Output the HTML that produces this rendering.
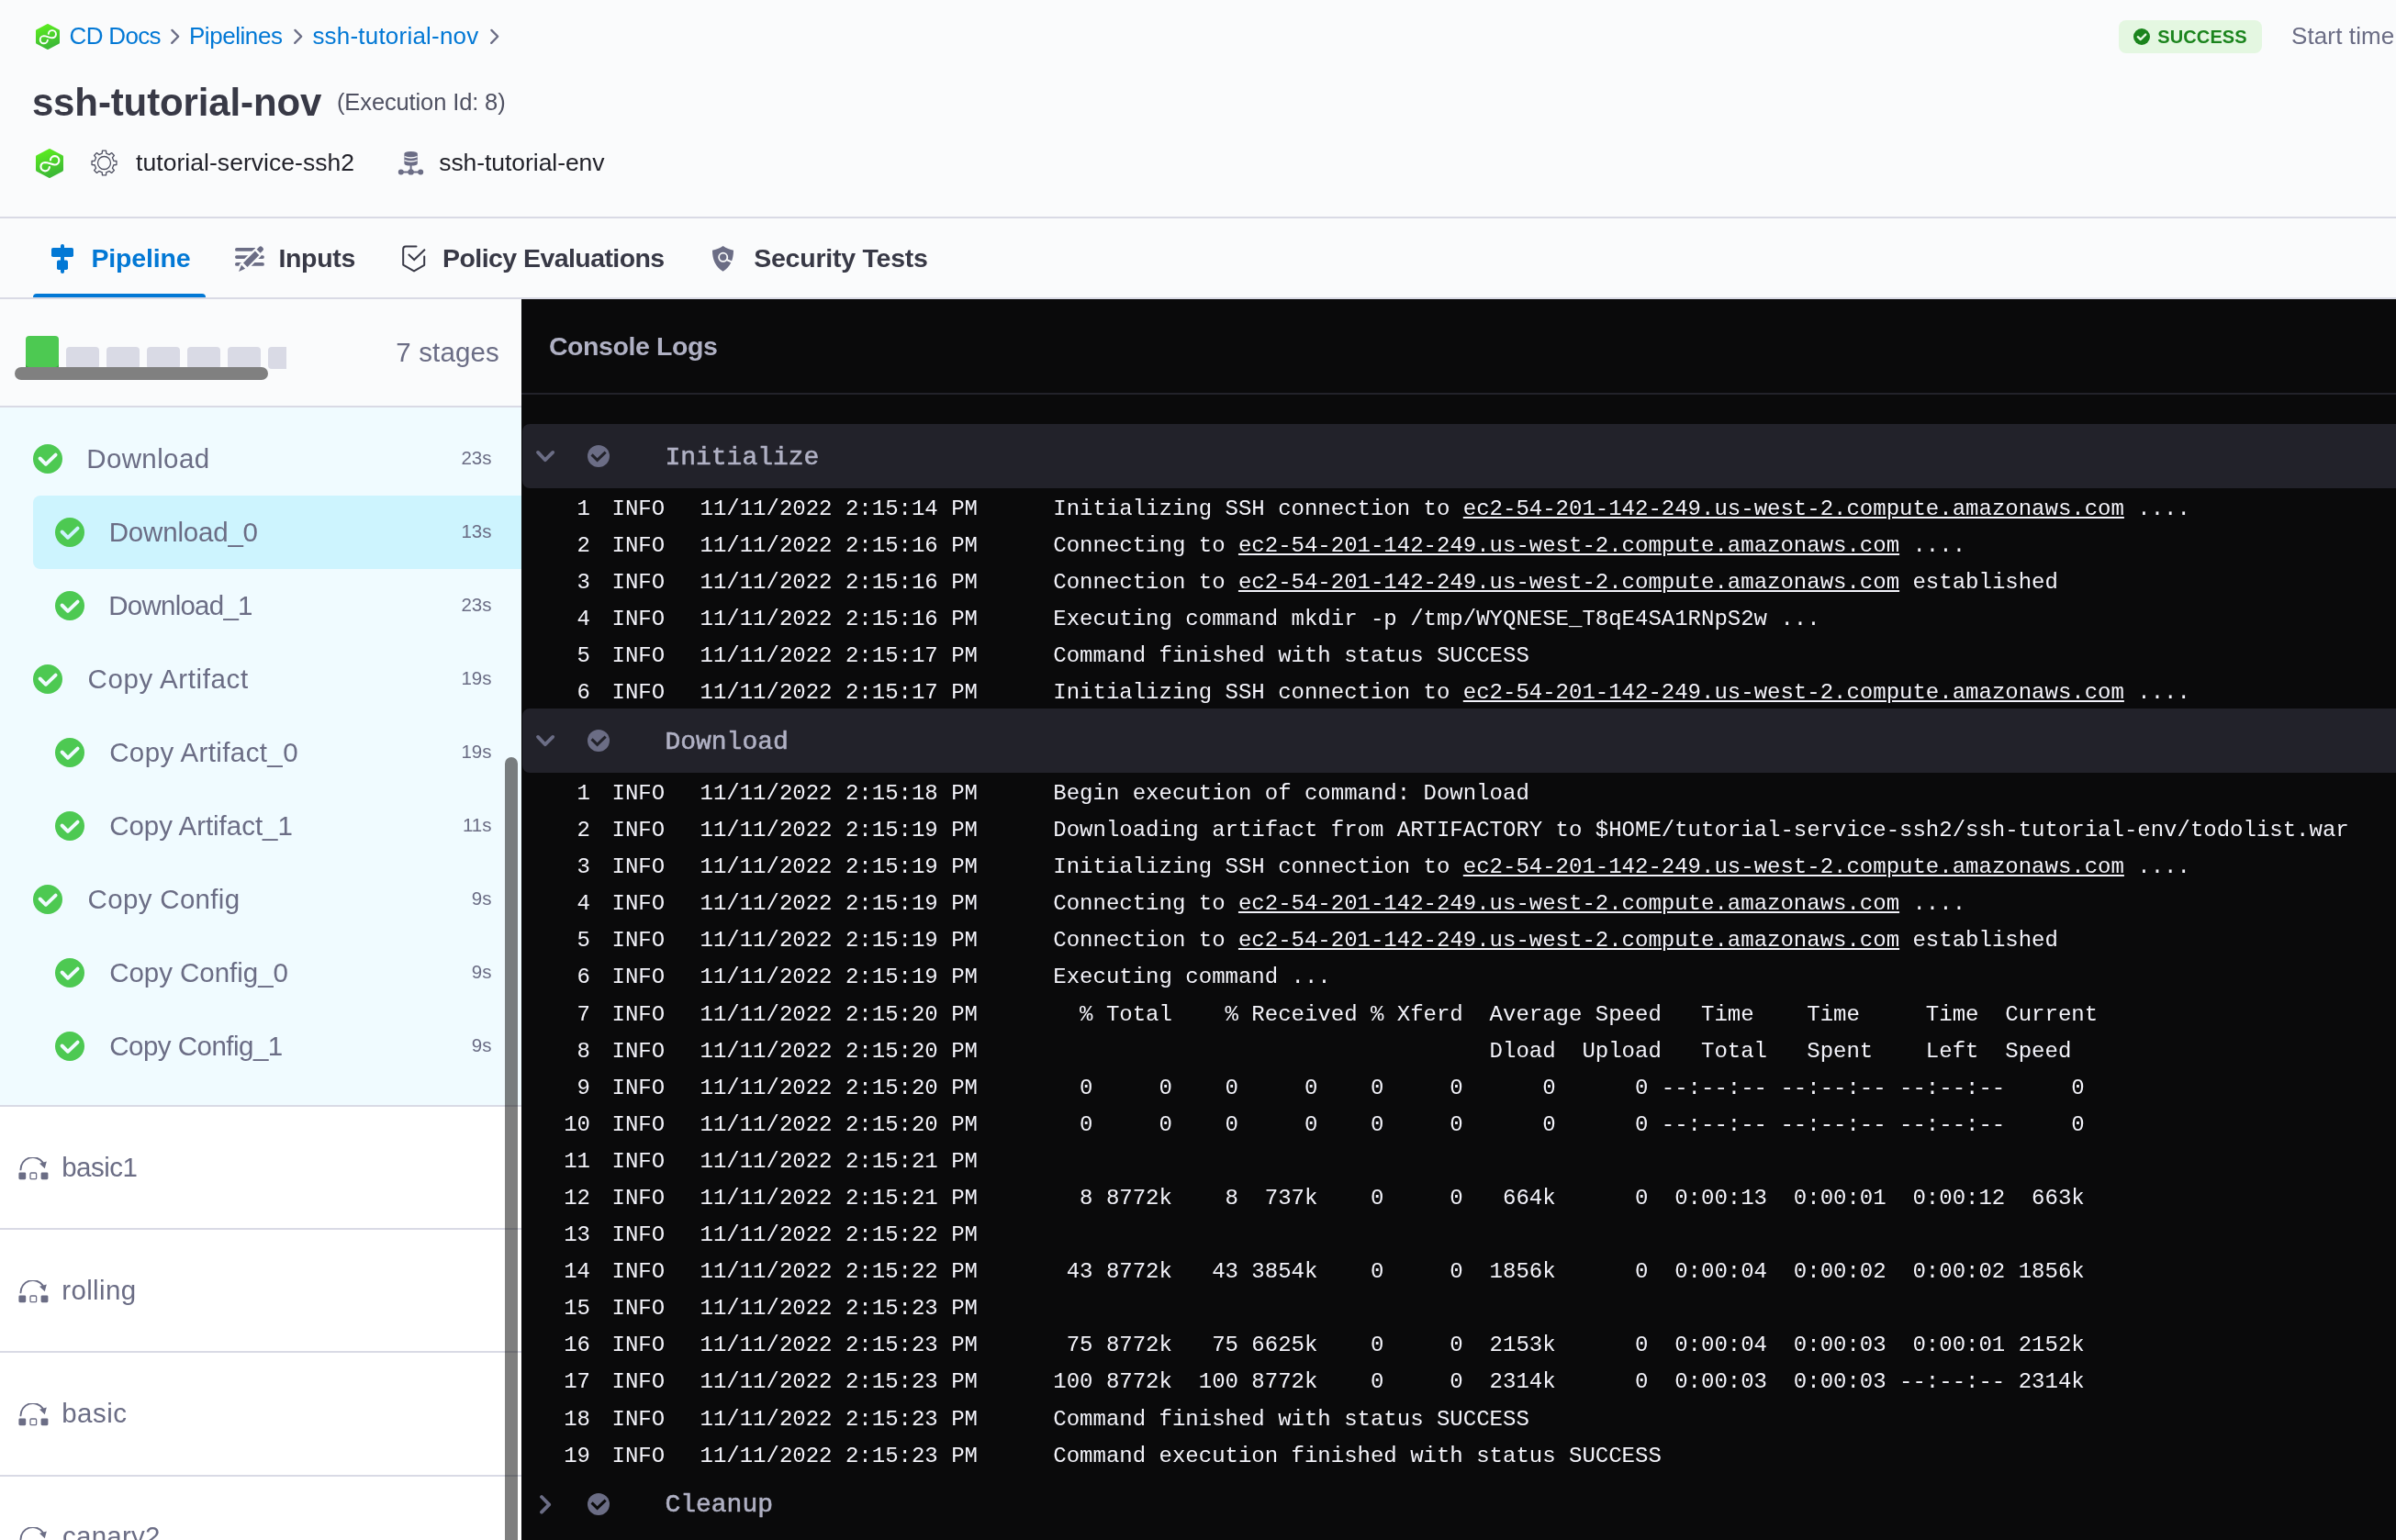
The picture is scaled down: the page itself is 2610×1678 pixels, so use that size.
<!DOCTYPE html>
<html><head><meta charset="utf-8"><title>ssh-tutorial-nov</title>
<style>
html,body{margin:0;padding:0;}
body{width:2610px;height:1678px;position:relative;overflow:hidden;background:#FAFBFC;font-family:'Liberation Sans', sans-serif;}
.t{position:absolute;white-space:pre;}
#w{position:absolute;left:0;top:0;width:2610px;height:1678px;will-change:transform;}
.b{position:absolute;display:block;}
u{text-decoration:underline;text-decoration-thickness:2px;text-underline-offset:2px;}
</style></head><body>
<div id="w">
<div class="b" style="left:0px;top:236px;width:2610px;height:2px;background:#D9DAE5;"></div>
<div class="b" style="left:0px;top:324px;width:2610px;height:2px;background:#D9DAE5;"></div>
<svg class="b" style="left:39px;top:26px" width="26" height="28" viewBox="0 0 26 28"><defs><linearGradient id="g1" x1="0" y1="0" x2="0.3" y2="1"><stop offset="0" stop-color="#5EF01E"/><stop offset="1" stop-color="#3DBA35"/></linearGradient></defs>
<polygon points="13.0,1.6 24.4,7.5600000000000005 24.4,20.439999999999998 13.0,26.4 1.6,20.439999999999998 1.6,7.5600000000000005" fill="url(#g1)" stroke="url(#g1)" stroke-width="3.2" stroke-linejoin="round"/>
<g transform="scale(1.0,1.0)"><path d="M13.8 10.8 A4.1 4.1 0 1 1 17.8 15.3 C15.6 15.3 11.4 13.1 8.7 13.1 A4.1 4.1 0 1 0 12.9 17.6" fill="none" stroke="#fff" stroke-width="1.9" stroke-linecap="round"/></g></svg>
<div class="t" style="left:75.60px;top:26.39px;font:400 26px/26px 'Liberation Sans', sans-serif;color:#0278D5;letter-spacing:-0.683px;">CD Docs</div>
<svg class="b" style="left:185px;top:31px" width="14" height="18" viewBox="0 0 14 18"><path d="M2.4 1.9 L9.2 8.7 L2.2 15.9" fill="none" stroke="#6B6D85" stroke-width="2.3" stroke-linecap="round" stroke-linejoin="round"/></svg>
<div class="t" style="left:205.90px;top:26.39px;font:400 26px/26px 'Liberation Sans', sans-serif;color:#0278D5;letter-spacing:-0.438px;">Pipelines</div>
<svg class="b" style="left:319px;top:31px" width="14" height="18" viewBox="0 0 14 18"><path d="M2.4 1.9 L9.2 8.7 L2.2 15.9" fill="none" stroke="#6B6D85" stroke-width="2.3" stroke-linecap="round" stroke-linejoin="round"/></svg>
<div class="t" style="left:340.40px;top:26.39px;font:400 26px/26px 'Liberation Sans', sans-serif;color:#0278D5;letter-spacing:0.207px;">ssh-tutorial-nov</div>
<svg class="b" style="left:533px;top:31px" width="14" height="18" viewBox="0 0 14 18"><path d="M2.4 1.9 L9.2 8.7 L2.2 15.9" fill="none" stroke="#6B6D85" stroke-width="2.3" stroke-linecap="round" stroke-linejoin="round"/></svg>
<div class="t" style="left:34.90px;top:91.05px;font:700 42px/42px 'Liberation Sans', sans-serif;color:#383946;letter-spacing:-0.127px;">ssh-tutorial-nov</div>
<div class="t" style="left:367.00px;top:98.81px;font:400 25.5px/25.5px 'Liberation Sans', sans-serif;color:#4F5162;letter-spacing:-0.125px;">(Execution Id: 8)</div>
<svg class="b" style="left:39px;top:162px" width="30" height="32" viewBox="0 0 30 32"><defs><linearGradient id="g2" x1="0" y1="0" x2="0.3" y2="1"><stop offset="0" stop-color="#5EF01E"/><stop offset="1" stop-color="#3DBA35"/></linearGradient></defs>
<polygon points="15.0,1.6 28.4,8.64 28.4,23.36 15.0,30.4 1.6,23.36 1.6,8.64" fill="url(#g2)" stroke="url(#g2)" stroke-width="3.2" stroke-linejoin="round"/>
<g transform="scale(1.1538461538461537,1.1428571428571428)"><path d="M13.8 10.8 A4.1 4.1 0 1 1 17.8 15.3 C15.6 15.3 11.4 13.1 8.7 13.1 A4.1 4.1 0 1 0 12.9 17.6" fill="none" stroke="#fff" stroke-width="1.9" stroke-linecap="round"/></g></svg>
<svg class="b" style="left:99px;top:163px" width="29" height="29" viewBox="0 0 29 29"><path d="M24.85 12.23 L27.95 12.48 L27.95 16.52 L24.85 16.77 L23.43 20.21 L25.44 22.58 L22.58 25.44 L20.21 23.43 L16.77 24.85 L16.52 27.95 L12.48 27.95 L12.23 24.85 L8.79 23.43 L6.42 25.44 L3.56 22.58 L5.57 20.21 L4.15 16.77 L1.05 16.52 L1.05 12.48 L4.15 12.23 L5.57 8.79 L3.56 6.42 L6.42 3.56 L8.79 5.57 L12.23 4.15 L12.48 1.05 L16.52 1.05 L16.77 4.15 L20.21 5.57 L22.58 3.56 L25.44 6.42 L23.43 8.79Z" fill="none" stroke="#4F5162" stroke-width="1.3" stroke-linejoin="round"/><circle cx="14.5" cy="14.5" r="7" fill="none" stroke="#4F5162" stroke-width="1.3"/></svg>
<div class="t" style="left:148.10px;top:163.57px;font:400 26.5px/26.5px 'Liberation Sans', sans-serif;color:#22222A;letter-spacing:0.045px;">tutorial-service-ssh2</div>
<svg class="b" style="left:433px;top:164px" width="29" height="29" viewBox="0 0 29 29"><g fill="#6B6D85"><path d="M7.4 3.5 Q7.4 1 14.6 1 Q21.8 1 21.8 3.5 V14 Q21.8 16.6 14.6 16.6 Q7.4 16.6 7.4 14 Z"/></g>
<path d="M7.6 6.6 Q14.6 9.4 21.6 6.6 M7.6 10.6 Q14.6 13.4 21.6 10.6" fill="none" stroke="#FAFBFC" stroke-width="1.3"/>
<path d="M14.6 16 V23.4 M3.8 23.4 H25.2" stroke="#6B6D85" stroke-width="2"/>
<circle cx="3.8" cy="23.4" r="3" fill="#6B6D85"/><circle cx="14.6" cy="23.4" r="3.2" fill="#6B6D85"/><circle cx="25.2" cy="23.4" r="3" fill="#6B6D85"/></svg>
<div class="t" style="left:478.20px;top:163.57px;font:400 26.5px/26.5px 'Liberation Sans', sans-serif;color:#22222A;letter-spacing:-0.053px;">ssh-tutorial-env</div>
<div class="b" style="left:2308px;top:22px;width:156px;height:36px;background:#E4F7E1;border-radius:8px"></div>
<svg class="b" style="left:2324px;top:31px" width="18" height="18" viewBox="0 0 18 18"><circle cx="9" cy="9" r="9" fill="#1B841D"/><path d="M4.8 9.2 L7.8 12 L13.2 6.6" fill="none" stroke="#E4F7E1" stroke-width="2.4" stroke-linecap="round" stroke-linejoin="round"/></svg>
<div class="t" style="left:2350.20px;top:30.07px;font:700 20px/20px 'Liberation Sans', sans-serif;color:#1B841D;letter-spacing:0.133px;">SUCCESS</div>
<div class="t" style="left:2496.00px;top:26.39px;font:400 26px/26px 'Liberation Sans', sans-serif;color:#6B6D85;letter-spacing:0.111px;">Start time</div>
<div class="b" style="left:36px;top:320px;width:188px;height:4px;background:#0278D5;border-radius:4px 4px 0 0"></div>
<svg class="b" style="left:55px;top:265px" width="26" height="34" viewBox="0 0 26 34"><g fill="#0278D5"><rect x="11" y="1" width="4" height="32" rx="2"/><rect x="1" y="5" width="24" height="10" rx="1.8"/><rect x="7" y="18.6" width="12" height="10.4" rx="1.8"/></g></svg>
<div class="t" style="left:99.50px;top:266.87px;font:700 28.5px/28.5px 'Liberation Sans', sans-serif;color:#0278D5;letter-spacing:-0.186px;">Pipeline</div>
<svg class="b" style="left:250px;top:262px" width="44" height="38" viewBox="0 0 44 38"><g transform="translate(-250,-262)"><g fill="none" stroke="#6B6D85" stroke-width="3.75" stroke-linecap="round"><path d="M257.9 271.9 H286"/><path d="M257.9 280 H286"/><path d="M257.9 287.9 H286"/></g>
<g fill="#6B6D85" stroke="#FAFBFC" stroke-width="4.4" stroke-linejoin="round" paint-order="stroke">
<polygon points="265,286.4 277.9,273.6 282.3,278 269.5,290.9"/>
<polygon points="260,295.9 263,288.75 267.1,292.7"/>
<path d="M279.6 271.8 L282.4 269 Q283.9 267.5 285.4 269 L286.4 270 Q287.9 271.5 286.4 273 L283.6 275.8 Z"/>
</g></g></svg>
<div class="t" style="left:303.40px;top:266.87px;font:700 28.5px/28.5px 'Liberation Sans', sans-serif;color:#383946;letter-spacing:-0.300px;">Inputs</div>
<svg class="b" style="left:437px;top:266px" width="28" height="32" viewBox="0 0 28 32"><path d="M16.5 2.4 H5 Q2.2 2.4 2.2 5.2 V22.6 L14 29.4 L25.2 22.8 V13.4" fill="none" stroke="#383946" stroke-width="2" stroke-linejoin="round" stroke-linecap="round"/><path d="M8.6 11.6 L14.2 17 L25.2 6.4" fill="none" stroke="#383946" stroke-width="2" stroke-linecap="square"/></svg>
<div class="t" style="left:482.10px;top:266.87px;font:700 28.5px/28.5px 'Liberation Sans', sans-serif;color:#383946;letter-spacing:-0.571px;">Policy Evaluations</div>
<svg class="b" style="left:770px;top:262px" width="34" height="38" viewBox="0 0 34 38"><g transform="translate(-770,-262)"><path d="M787.6 268 C784 270.4 780 272 776 272.7 C776 283 779.5 290.5 787.6 295.7 C795.5 290.5 799 283 799 272.7 C795.2 272 791.2 270.4 787.6 268 Z" fill="#6B6D85"/>
<circle cx="787.7" cy="280.3" r="4.6" fill="none" stroke="#FAFBFC" stroke-width="1.8"/>
<path d="M791.6 283 L800 286.8" stroke="#FAFBFC" stroke-width="2"/></g></svg>
<div class="t" style="left:821.20px;top:266.87px;font:700 28.5px/28.5px 'Liberation Sans', sans-serif;color:#383946;letter-spacing:-0.231px;">Security Tests</div>
<div class="b" style="left:0px;top:326px;width:568px;height:116px;background:#FAFBFC;"></div>
<div class="b" style="left:0px;top:442px;width:568px;height:2px;background:#D9DAE5;"></div>
<div class="b" style="left:0px;top:444px;width:568px;height:760px;background:#F0FBFF;"></div>
<div class="b" style="left:0px;top:1204px;width:568px;height:2px;background:#D9DAE5;"></div>
<div class="b" style="left:0px;top:1206px;width:568px;height:2610px;background:#FFFFFF;"></div>
<div class="b" style="left:28px;top:366px;width:36px;height:36px;background:#4DC952;border-radius:4px;box-shadow:inset 0 -2px 0 #2E9A33"></div>
<div class="b" style="left:72px;top:378px;width:36px;height:24px;background:#D9DAE5;border-radius:4px"></div>
<div class="b" style="left:116px;top:378px;width:36px;height:24px;background:#D9DAE5;border-radius:4px"></div>
<div class="b" style="left:160px;top:378px;width:36px;height:24px;background:#D9DAE5;border-radius:4px"></div>
<div class="b" style="left:204px;top:378px;width:36px;height:24px;background:#D9DAE5;border-radius:4px"></div>
<div class="b" style="left:248px;top:378px;width:36px;height:24px;background:#D9DAE5;border-radius:4px"></div>
<div class="b" style="left:292px;top:378px;width:20px;height:24px;background:#D9DAE5;border-radius:4px 0 0 4px"></div>
<div class="b" style="left:16px;top:400px;width:276px;height:14px;background:#808080;border-radius:7px"></div>
<div class="t" style="right:2066.00px;top:368.93px;font:400 29.5px/29.5px 'Liberation Sans', sans-serif;color:#6B6D85;letter-spacing:0.143px;">7 stages</div>
<div class="b" style="left:36px;top:540px;width:532px;height:80px;background:#CDF4FE;border-radius:8px 0 0 8px"></div>
<svg class="b" style="left:36px;top:484px" width="32" height="32" viewBox="0 0 32 32"><circle cx="16" cy="16" r="16" fill="#4DC952"/><path d="M7.6 15.5 L13.9 21.8 L24.6 11.6" fill="none" stroke="#F0FBFF" stroke-width="3.9" stroke-linecap="round" stroke-linejoin="round"/></svg>
<div class="t" style="left:94.20px;top:485.03px;font:400 29.5px/29.5px 'Liberation Sans', sans-serif;color:#6B6D85;letter-spacing:0.386px;">Download</div>
<div class="t" style="right:2074.50px;top:488.65px;font:400 20.5px/20.5px 'Liberation Sans', sans-serif;color:#6B6D85;">23s</div>
<svg class="b" style="left:60px;top:564px" width="32" height="32" viewBox="0 0 32 32"><circle cx="16" cy="16" r="16" fill="#4DC952"/><path d="M7.6 15.5 L13.9 21.8 L24.6 11.6" fill="none" stroke="#CDF4FE" stroke-width="3.9" stroke-linecap="round" stroke-linejoin="round"/></svg>
<div class="t" style="left:118.75px;top:565.03px;font:400 29.5px/29.5px 'Liberation Sans', sans-serif;color:#6B6D85;letter-spacing:-0.194px;">Download_0</div>
<div class="t" style="right:2074.50px;top:568.65px;font:400 20.5px/20.5px 'Liberation Sans', sans-serif;color:#6B6D85;">13s</div>
<svg class="b" style="left:60px;top:644px" width="32" height="32" viewBox="0 0 32 32"><circle cx="16" cy="16" r="16" fill="#4DC952"/><path d="M7.6 15.5 L13.9 21.8 L24.6 11.6" fill="none" stroke="#F0FBFF" stroke-width="3.9" stroke-linecap="round" stroke-linejoin="round"/></svg>
<div class="t" style="left:118.20px;top:645.03px;font:400 29.5px/29.5px 'Liberation Sans', sans-serif;color:#6B6D85;letter-spacing:-0.744px;">Download_1</div>
<div class="t" style="right:2074.50px;top:648.65px;font:400 20.5px/20.5px 'Liberation Sans', sans-serif;color:#6B6D85;">23s</div>
<svg class="b" style="left:36px;top:724px" width="32" height="32" viewBox="0 0 32 32"><circle cx="16" cy="16" r="16" fill="#4DC952"/><path d="M7.6 15.5 L13.9 21.8 L24.6 11.6" fill="none" stroke="#F0FBFF" stroke-width="3.9" stroke-linecap="round" stroke-linejoin="round"/></svg>
<div class="t" style="left:95.60px;top:725.03px;font:400 29.5px/29.5px 'Liberation Sans', sans-serif;color:#6B6D85;letter-spacing:0.608px;">Copy Artifact</div>
<div class="t" style="right:2074.50px;top:728.65px;font:400 20.5px/20.5px 'Liberation Sans', sans-serif;color:#6B6D85;">19s</div>
<svg class="b" style="left:60px;top:804px" width="32" height="32" viewBox="0 0 32 32"><circle cx="16" cy="16" r="16" fill="#4DC952"/><path d="M7.6 15.5 L13.9 21.8 L24.6 11.6" fill="none" stroke="#F0FBFF" stroke-width="3.9" stroke-linecap="round" stroke-linejoin="round"/></svg>
<div class="t" style="left:119.20px;top:805.03px;font:400 29.5px/29.5px 'Liberation Sans', sans-serif;color:#6B6D85;letter-spacing:0.379px;">Copy Artifact_0</div>
<div class="t" style="right:2074.50px;top:808.65px;font:400 20.5px/20.5px 'Liberation Sans', sans-serif;color:#6B6D85;">19s</div>
<svg class="b" style="left:60px;top:884px" width="32" height="32" viewBox="0 0 32 32"><circle cx="16" cy="16" r="16" fill="#4DC952"/><path d="M7.6 15.5 L13.9 21.8 L24.6 11.6" fill="none" stroke="#F0FBFF" stroke-width="3.9" stroke-linecap="round" stroke-linejoin="round"/></svg>
<div class="t" style="left:119.20px;top:885.03px;font:400 29.5px/29.5px 'Liberation Sans', sans-serif;color:#6B6D85;letter-spacing:-0.029px;">Copy Artifact_1</div>
<div class="t" style="right:2074.50px;top:888.65px;font:400 20.5px/20.5px 'Liberation Sans', sans-serif;color:#6B6D85;">11s</div>
<svg class="b" style="left:36px;top:964px" width="32" height="32" viewBox="0 0 32 32"><circle cx="16" cy="16" r="16" fill="#4DC952"/><path d="M7.6 15.5 L13.9 21.8 L24.6 11.6" fill="none" stroke="#F0FBFF" stroke-width="3.9" stroke-linecap="round" stroke-linejoin="round"/></svg>
<div class="t" style="left:95.60px;top:965.03px;font:400 29.5px/29.5px 'Liberation Sans', sans-serif;color:#6B6D85;letter-spacing:0.320px;">Copy Config</div>
<div class="t" style="right:2074.50px;top:968.65px;font:400 20.5px/20.5px 'Liberation Sans', sans-serif;color:#6B6D85;">9s</div>
<svg class="b" style="left:60px;top:1044px" width="32" height="32" viewBox="0 0 32 32"><circle cx="16" cy="16" r="16" fill="#4DC952"/><path d="M7.6 15.5 L13.9 21.8 L24.6 11.6" fill="none" stroke="#F0FBFF" stroke-width="3.9" stroke-linecap="round" stroke-linejoin="round"/></svg>
<div class="t" style="left:119.20px;top:1045.03px;font:400 29.5px/29.5px 'Liberation Sans', sans-serif;color:#6B6D85;letter-spacing:-0.033px;">Copy Config_0</div>
<div class="t" style="right:2074.50px;top:1048.65px;font:400 20.5px/20.5px 'Liberation Sans', sans-serif;color:#6B6D85;">9s</div>
<svg class="b" style="left:60px;top:1124px" width="32" height="32" viewBox="0 0 32 32"><circle cx="16" cy="16" r="16" fill="#4DC952"/><path d="M7.6 15.5 L13.9 21.8 L24.6 11.6" fill="none" stroke="#F0FBFF" stroke-width="3.9" stroke-linecap="round" stroke-linejoin="round"/></svg>
<div class="t" style="left:119.20px;top:1125.03px;font:400 29.5px/29.5px 'Liberation Sans', sans-serif;color:#6B6D85;letter-spacing:-0.508px;">Copy Config_1</div>
<div class="t" style="right:2074.50px;top:1128.65px;font:400 20.5px/20.5px 'Liberation Sans', sans-serif;color:#6B6D85;">9s</div>
<svg class="b" style="left:20px;top:1260.6px" width="34" height="28" viewBox="0 0 34 28"><g fill="#6B6D85"><rect x="0.4" y="16.4" width="7.8" height="7.8" rx="1.4"/><rect x="24.6" y="16.4" width="7.8" height="7.8" rx="1.4"/></g>
<rect x="13" y="17" width="6.6" height="6.6" rx="1.2" fill="none" stroke="#6B6D85" stroke-width="1.3"/>
<path d="M2.5 13.4 A13.3 13.3 0 0 1 26.6 5.6" fill="none" stroke="#6B6D85" stroke-width="1.9" stroke-linecap="round"/>
<path d="M23 6.8 L30.8 4.4 L28.8 12.2 Z" fill="#6B6D85"/></svg>
<div class="t" style="left:67.20px;top:1256.73px;font:400 29.5px/29.5px 'Liberation Sans', sans-serif;color:#6B6D85;letter-spacing:-0.500px;">basic1</div>
<div class="b" style="left:0px;top:1338px;width:568px;height:2px;background:#D9DAE5;"></div>
<svg class="b" style="left:20px;top:1394.6px" width="34" height="28" viewBox="0 0 34 28"><g fill="#6B6D85"><rect x="0.4" y="16.4" width="7.8" height="7.8" rx="1.4"/><rect x="24.6" y="16.4" width="7.8" height="7.8" rx="1.4"/></g>
<rect x="13" y="17" width="6.6" height="6.6" rx="1.2" fill="none" stroke="#6B6D85" stroke-width="1.3"/>
<path d="M2.5 13.4 A13.3 13.3 0 0 1 26.6 5.6" fill="none" stroke="#6B6D85" stroke-width="1.9" stroke-linecap="round"/>
<path d="M23 6.8 L30.8 4.4 L28.8 12.2 Z" fill="#6B6D85"/></svg>
<div class="t" style="left:67.20px;top:1390.93px;font:400 29.5px/29.5px 'Liberation Sans', sans-serif;color:#6B6D85;letter-spacing:0.383px;">rolling</div>
<div class="b" style="left:0px;top:1472px;width:568px;height:2px;background:#D9DAE5;"></div>
<svg class="b" style="left:20px;top:1528.6px" width="34" height="28" viewBox="0 0 34 28"><g fill="#6B6D85"><rect x="0.4" y="16.4" width="7.8" height="7.8" rx="1.4"/><rect x="24.6" y="16.4" width="7.8" height="7.8" rx="1.4"/></g>
<rect x="13" y="17" width="6.6" height="6.6" rx="1.2" fill="none" stroke="#6B6D85" stroke-width="1.3"/>
<path d="M2.5 13.4 A13.3 13.3 0 0 1 26.6 5.6" fill="none" stroke="#6B6D85" stroke-width="1.9" stroke-linecap="round"/>
<path d="M23 6.8 L30.8 4.4 L28.8 12.2 Z" fill="#6B6D85"/></svg>
<div class="t" style="left:67.20px;top:1525.13px;font:400 29.5px/29.5px 'Liberation Sans', sans-serif;color:#6B6D85;letter-spacing:0.500px;">basic</div>
<div class="b" style="left:0px;top:1607px;width:568px;height:2px;background:#D9DAE5;"></div>
<svg class="b" style="left:20px;top:1663.6px" width="34" height="28" viewBox="0 0 34 28"><g fill="#6B6D85"><rect x="0.4" y="16.4" width="7.8" height="7.8" rx="1.4"/><rect x="24.6" y="16.4" width="7.8" height="7.8" rx="1.4"/></g>
<rect x="13" y="17" width="6.6" height="6.6" rx="1.2" fill="none" stroke="#6B6D85" stroke-width="1.3"/>
<path d="M2.5 13.4 A13.3 13.3 0 0 1 26.6 5.6" fill="none" stroke="#6B6D85" stroke-width="1.9" stroke-linecap="round"/>
<path d="M23 6.8 L30.8 4.4 L28.8 12.2 Z" fill="#6B6D85"/></svg>
<div class="t" style="left:68.00px;top:1659.33px;font:400 29.5px/29.5px 'Liberation Sans', sans-serif;color:#6B6D85;letter-spacing:0.250px;">canary2</div>
<div class="b" style="left:550px;top:825px;width:14px;height:900px;background:rgba(0,0,0,0.5);border-radius:7px 7px 0 0"></div>
<div class="b" style="left:568px;top:326px;width:2042px;height:1352px;background:#0A0A0B;"></div>
<div class="t" style="left:597.90px;top:363.47px;font:700 28.5px/28.5px 'Liberation Sans', sans-serif;color:#B0B1C4;letter-spacing:-0.409px;">Console Logs</div>
<div class="b" style="left:568px;top:428px;width:2042px;height:2px;background:#22222A;"></div>
<div class="b" style="left:569px;top:462px;width:2041px;height:70px;background:#22222A;border-radius:8px 0 0 8px"></div>
<svg class="b" style="left:582px;top:489px" width="24" height="16" viewBox="0 0 24 16"><path d="M4 3.9 L11.9 12.2 L20.2 3.9" fill="none" stroke="#6B6D85" stroke-width="3.8" stroke-linecap="round" stroke-linejoin="round"/></svg>
<svg class="b" style="left:640px;top:485px" width="24" height="24" viewBox="0 0 24 24"><circle cx="12" cy="12" r="12" fill="#6B6D85"/><path d="M5.6 11.4 L10.6 16.4 L18.6 8.6" fill="none" stroke="#22222A" stroke-width="3" stroke-linecap="square" stroke-linejoin="miter"/></svg>
<div class="t" style="left:724.40px;top:484.54px;font:400 28px/28px 'Liberation Mono', monospace;color:#B0B1C4;-webkit-text-stroke:0.55px #B0B1C4">Initialize</div>
<div class="t" style="right:1967.00px;top:543.00px;font:400 24px/24px 'Liberation Mono', monospace;color:#F3F3FA;">1</div>
<div class="t" style="left:666.50px;top:543.00px;font:400 24px/24px 'Liberation Mono', monospace;color:#F3F3FA;">INFO</div>
<div class="t" style="left:762.50px;top:543.00px;font:400 24px/24px 'Liberation Mono', monospace;color:#F3F3FA;">11/11/2022 2:15:14 PM</div>
<div class="t" style="left:1147.30px;top:543.00px;font:400 24px/24px 'Liberation Mono', monospace;color:#F3F3FA;white-space:pre">Initializing SSH connection to <u>ec2-54-201-142-249.us-west-2.compute.amazonaws.com</u> ....</div>
<div class="t" style="right:1967.00px;top:583.09px;font:400 24px/24px 'Liberation Mono', monospace;color:#F3F3FA;">2</div>
<div class="t" style="left:666.50px;top:583.09px;font:400 24px/24px 'Liberation Mono', monospace;color:#F3F3FA;">INFO</div>
<div class="t" style="left:762.50px;top:583.09px;font:400 24px/24px 'Liberation Mono', monospace;color:#F3F3FA;">11/11/2022 2:15:16 PM</div>
<div class="t" style="left:1147.30px;top:583.09px;font:400 24px/24px 'Liberation Mono', monospace;color:#F3F3FA;white-space:pre">Connecting to <u>ec2-54-201-142-249.us-west-2.compute.amazonaws.com</u> ....</div>
<div class="t" style="right:1967.00px;top:623.18px;font:400 24px/24px 'Liberation Mono', monospace;color:#F3F3FA;">3</div>
<div class="t" style="left:666.50px;top:623.18px;font:400 24px/24px 'Liberation Mono', monospace;color:#F3F3FA;">INFO</div>
<div class="t" style="left:762.50px;top:623.18px;font:400 24px/24px 'Liberation Mono', monospace;color:#F3F3FA;">11/11/2022 2:15:16 PM</div>
<div class="t" style="left:1147.30px;top:623.18px;font:400 24px/24px 'Liberation Mono', monospace;color:#F3F3FA;white-space:pre">Connection to <u>ec2-54-201-142-249.us-west-2.compute.amazonaws.com</u> established</div>
<div class="t" style="right:1967.00px;top:663.27px;font:400 24px/24px 'Liberation Mono', monospace;color:#F3F3FA;">4</div>
<div class="t" style="left:666.50px;top:663.27px;font:400 24px/24px 'Liberation Mono', monospace;color:#F3F3FA;">INFO</div>
<div class="t" style="left:762.50px;top:663.27px;font:400 24px/24px 'Liberation Mono', monospace;color:#F3F3FA;">11/11/2022 2:15:16 PM</div>
<div class="t" style="left:1147.30px;top:663.27px;font:400 24px/24px 'Liberation Mono', monospace;color:#F3F3FA;white-space:pre">Executing command mkdir -p /tmp/WYQNESE_T8qE4SA1RNpS2w ...</div>
<div class="t" style="right:1967.00px;top:703.36px;font:400 24px/24px 'Liberation Mono', monospace;color:#F3F3FA;">5</div>
<div class="t" style="left:666.50px;top:703.36px;font:400 24px/24px 'Liberation Mono', monospace;color:#F3F3FA;">INFO</div>
<div class="t" style="left:762.50px;top:703.36px;font:400 24px/24px 'Liberation Mono', monospace;color:#F3F3FA;">11/11/2022 2:15:17 PM</div>
<div class="t" style="left:1147.30px;top:703.36px;font:400 24px/24px 'Liberation Mono', monospace;color:#F3F3FA;white-space:pre">Command finished with status SUCCESS</div>
<div class="t" style="right:1967.00px;top:743.45px;font:400 24px/24px 'Liberation Mono', monospace;color:#F3F3FA;">6</div>
<div class="t" style="left:666.50px;top:743.45px;font:400 24px/24px 'Liberation Mono', monospace;color:#F3F3FA;">INFO</div>
<div class="t" style="left:762.50px;top:743.45px;font:400 24px/24px 'Liberation Mono', monospace;color:#F3F3FA;">11/11/2022 2:15:17 PM</div>
<div class="t" style="left:1147.30px;top:743.45px;font:400 24px/24px 'Liberation Mono', monospace;color:#F3F3FA;white-space:pre">Initializing SSH connection to <u>ec2-54-201-142-249.us-west-2.compute.amazonaws.com</u> ....</div>
<div class="b" style="left:569px;top:772px;width:2041px;height:70px;background:#22222A;border-radius:8px 0 0 8px"></div>
<svg class="b" style="left:582px;top:799px" width="24" height="16" viewBox="0 0 24 16"><path d="M4 3.9 L11.9 12.2 L20.2 3.9" fill="none" stroke="#6B6D85" stroke-width="3.8" stroke-linecap="round" stroke-linejoin="round"/></svg>
<svg class="b" style="left:640px;top:795px" width="24" height="24" viewBox="0 0 24 24"><circle cx="12" cy="12" r="12" fill="#6B6D85"/><path d="M5.6 11.4 L10.6 16.4 L18.6 8.6" fill="none" stroke="#22222A" stroke-width="3" stroke-linecap="square" stroke-linejoin="miter"/></svg>
<div class="t" style="left:724.40px;top:794.54px;font:400 28px/28px 'Liberation Mono', monospace;color:#B0B1C4;-webkit-text-stroke:0.55px #B0B1C4">Download</div>
<div class="t" style="right:1967.00px;top:853.00px;font:400 24px/24px 'Liberation Mono', monospace;color:#F3F3FA;">1</div>
<div class="t" style="left:666.50px;top:853.00px;font:400 24px/24px 'Liberation Mono', monospace;color:#F3F3FA;">INFO</div>
<div class="t" style="left:762.50px;top:853.00px;font:400 24px/24px 'Liberation Mono', monospace;color:#F3F3FA;">11/11/2022 2:15:18 PM</div>
<div class="t" style="left:1147.30px;top:853.00px;font:400 24px/24px 'Liberation Mono', monospace;color:#F3F3FA;white-space:pre">Begin execution of command: Download</div>
<div class="t" style="right:1967.00px;top:893.09px;font:400 24px/24px 'Liberation Mono', monospace;color:#F3F3FA;">2</div>
<div class="t" style="left:666.50px;top:893.09px;font:400 24px/24px 'Liberation Mono', monospace;color:#F3F3FA;">INFO</div>
<div class="t" style="left:762.50px;top:893.09px;font:400 24px/24px 'Liberation Mono', monospace;color:#F3F3FA;">11/11/2022 2:15:19 PM</div>
<div class="t" style="left:1147.30px;top:893.09px;font:400 24px/24px 'Liberation Mono', monospace;color:#F3F3FA;white-space:pre">Downloading artifact from ARTIFACTORY to $HOME/tutorial-service-ssh2/ssh-tutorial-env/todolist.war</div>
<div class="t" style="right:1967.00px;top:933.18px;font:400 24px/24px 'Liberation Mono', monospace;color:#F3F3FA;">3</div>
<div class="t" style="left:666.50px;top:933.18px;font:400 24px/24px 'Liberation Mono', monospace;color:#F3F3FA;">INFO</div>
<div class="t" style="left:762.50px;top:933.18px;font:400 24px/24px 'Liberation Mono', monospace;color:#F3F3FA;">11/11/2022 2:15:19 PM</div>
<div class="t" style="left:1147.30px;top:933.18px;font:400 24px/24px 'Liberation Mono', monospace;color:#F3F3FA;white-space:pre">Initializing SSH connection to <u>ec2-54-201-142-249.us-west-2.compute.amazonaws.com</u> ....</div>
<div class="t" style="right:1967.00px;top:973.27px;font:400 24px/24px 'Liberation Mono', monospace;color:#F3F3FA;">4</div>
<div class="t" style="left:666.50px;top:973.27px;font:400 24px/24px 'Liberation Mono', monospace;color:#F3F3FA;">INFO</div>
<div class="t" style="left:762.50px;top:973.27px;font:400 24px/24px 'Liberation Mono', monospace;color:#F3F3FA;">11/11/2022 2:15:19 PM</div>
<div class="t" style="left:1147.30px;top:973.27px;font:400 24px/24px 'Liberation Mono', monospace;color:#F3F3FA;white-space:pre">Connecting to <u>ec2-54-201-142-249.us-west-2.compute.amazonaws.com</u> ....</div>
<div class="t" style="right:1967.00px;top:1013.36px;font:400 24px/24px 'Liberation Mono', monospace;color:#F3F3FA;">5</div>
<div class="t" style="left:666.50px;top:1013.36px;font:400 24px/24px 'Liberation Mono', monospace;color:#F3F3FA;">INFO</div>
<div class="t" style="left:762.50px;top:1013.36px;font:400 24px/24px 'Liberation Mono', monospace;color:#F3F3FA;">11/11/2022 2:15:19 PM</div>
<div class="t" style="left:1147.30px;top:1013.36px;font:400 24px/24px 'Liberation Mono', monospace;color:#F3F3FA;white-space:pre">Connection to <u>ec2-54-201-142-249.us-west-2.compute.amazonaws.com</u> established</div>
<div class="t" style="right:1967.00px;top:1053.45px;font:400 24px/24px 'Liberation Mono', monospace;color:#F3F3FA;">6</div>
<div class="t" style="left:666.50px;top:1053.45px;font:400 24px/24px 'Liberation Mono', monospace;color:#F3F3FA;">INFO</div>
<div class="t" style="left:762.50px;top:1053.45px;font:400 24px/24px 'Liberation Mono', monospace;color:#F3F3FA;">11/11/2022 2:15:19 PM</div>
<div class="t" style="left:1147.30px;top:1053.45px;font:400 24px/24px 'Liberation Mono', monospace;color:#F3F3FA;white-space:pre">Executing command ...</div>
<div class="t" style="right:1967.00px;top:1093.54px;font:400 24px/24px 'Liberation Mono', monospace;color:#F3F3FA;">7</div>
<div class="t" style="left:666.50px;top:1093.54px;font:400 24px/24px 'Liberation Mono', monospace;color:#F3F3FA;">INFO</div>
<div class="t" style="left:762.50px;top:1093.54px;font:400 24px/24px 'Liberation Mono', monospace;color:#F3F3FA;">11/11/2022 2:15:20 PM</div>
<div class="t" style="left:1147.30px;top:1093.54px;font:400 24px/24px 'Liberation Mono', monospace;color:#F3F3FA;white-space:pre">  % Total    % Received % Xferd  Average Speed   Time    Time     Time  Current</div>
<div class="t" style="right:1967.00px;top:1133.63px;font:400 24px/24px 'Liberation Mono', monospace;color:#F3F3FA;">8</div>
<div class="t" style="left:666.50px;top:1133.63px;font:400 24px/24px 'Liberation Mono', monospace;color:#F3F3FA;">INFO</div>
<div class="t" style="left:762.50px;top:1133.63px;font:400 24px/24px 'Liberation Mono', monospace;color:#F3F3FA;">11/11/2022 2:15:20 PM</div>
<div class="t" style="left:1147.30px;top:1133.63px;font:400 24px/24px 'Liberation Mono', monospace;color:#F3F3FA;white-space:pre">                                 Dload  Upload   Total   Spent    Left  Speed</div>
<div class="t" style="right:1967.00px;top:1173.72px;font:400 24px/24px 'Liberation Mono', monospace;color:#F3F3FA;">9</div>
<div class="t" style="left:666.50px;top:1173.72px;font:400 24px/24px 'Liberation Mono', monospace;color:#F3F3FA;">INFO</div>
<div class="t" style="left:762.50px;top:1173.72px;font:400 24px/24px 'Liberation Mono', monospace;color:#F3F3FA;">11/11/2022 2:15:20 PM</div>
<div class="t" style="left:1147.30px;top:1173.72px;font:400 24px/24px 'Liberation Mono', monospace;color:#F3F3FA;white-space:pre">  0     0    0     0    0     0      0      0 --:--:-- --:--:-- --:--:--     0</div>
<div class="t" style="right:1967.00px;top:1213.81px;font:400 24px/24px 'Liberation Mono', monospace;color:#F3F3FA;">10</div>
<div class="t" style="left:666.50px;top:1213.81px;font:400 24px/24px 'Liberation Mono', monospace;color:#F3F3FA;">INFO</div>
<div class="t" style="left:762.50px;top:1213.81px;font:400 24px/24px 'Liberation Mono', monospace;color:#F3F3FA;">11/11/2022 2:15:20 PM</div>
<div class="t" style="left:1147.30px;top:1213.81px;font:400 24px/24px 'Liberation Mono', monospace;color:#F3F3FA;white-space:pre">  0     0    0     0    0     0      0      0 --:--:-- --:--:-- --:--:--     0</div>
<div class="t" style="right:1967.00px;top:1253.90px;font:400 24px/24px 'Liberation Mono', monospace;color:#F3F3FA;">11</div>
<div class="t" style="left:666.50px;top:1253.90px;font:400 24px/24px 'Liberation Mono', monospace;color:#F3F3FA;">INFO</div>
<div class="t" style="left:762.50px;top:1253.90px;font:400 24px/24px 'Liberation Mono', monospace;color:#F3F3FA;">11/11/2022 2:15:21 PM</div>
<div class="t" style="right:1967.00px;top:1293.99px;font:400 24px/24px 'Liberation Mono', monospace;color:#F3F3FA;">12</div>
<div class="t" style="left:666.50px;top:1293.99px;font:400 24px/24px 'Liberation Mono', monospace;color:#F3F3FA;">INFO</div>
<div class="t" style="left:762.50px;top:1293.99px;font:400 24px/24px 'Liberation Mono', monospace;color:#F3F3FA;">11/11/2022 2:15:21 PM</div>
<div class="t" style="left:1147.30px;top:1293.99px;font:400 24px/24px 'Liberation Mono', monospace;color:#F3F3FA;white-space:pre">  8 8772k    8  737k    0     0   664k      0  0:00:13  0:00:01  0:00:12  663k</div>
<div class="t" style="right:1967.00px;top:1334.08px;font:400 24px/24px 'Liberation Mono', monospace;color:#F3F3FA;">13</div>
<div class="t" style="left:666.50px;top:1334.08px;font:400 24px/24px 'Liberation Mono', monospace;color:#F3F3FA;">INFO</div>
<div class="t" style="left:762.50px;top:1334.08px;font:400 24px/24px 'Liberation Mono', monospace;color:#F3F3FA;">11/11/2022 2:15:22 PM</div>
<div class="t" style="right:1967.00px;top:1374.17px;font:400 24px/24px 'Liberation Mono', monospace;color:#F3F3FA;">14</div>
<div class="t" style="left:666.50px;top:1374.17px;font:400 24px/24px 'Liberation Mono', monospace;color:#F3F3FA;">INFO</div>
<div class="t" style="left:762.50px;top:1374.17px;font:400 24px/24px 'Liberation Mono', monospace;color:#F3F3FA;">11/11/2022 2:15:22 PM</div>
<div class="t" style="left:1147.30px;top:1374.17px;font:400 24px/24px 'Liberation Mono', monospace;color:#F3F3FA;white-space:pre"> 43 8772k   43 3854k    0     0  1856k      0  0:00:04  0:00:02  0:00:02 1856k</div>
<div class="t" style="right:1967.00px;top:1414.26px;font:400 24px/24px 'Liberation Mono', monospace;color:#F3F3FA;">15</div>
<div class="t" style="left:666.50px;top:1414.26px;font:400 24px/24px 'Liberation Mono', monospace;color:#F3F3FA;">INFO</div>
<div class="t" style="left:762.50px;top:1414.26px;font:400 24px/24px 'Liberation Mono', monospace;color:#F3F3FA;">11/11/2022 2:15:23 PM</div>
<div class="t" style="right:1967.00px;top:1454.35px;font:400 24px/24px 'Liberation Mono', monospace;color:#F3F3FA;">16</div>
<div class="t" style="left:666.50px;top:1454.35px;font:400 24px/24px 'Liberation Mono', monospace;color:#F3F3FA;">INFO</div>
<div class="t" style="left:762.50px;top:1454.35px;font:400 24px/24px 'Liberation Mono', monospace;color:#F3F3FA;">11/11/2022 2:15:23 PM</div>
<div class="t" style="left:1147.30px;top:1454.35px;font:400 24px/24px 'Liberation Mono', monospace;color:#F3F3FA;white-space:pre"> 75 8772k   75 6625k    0     0  2153k      0  0:00:04  0:00:03  0:00:01 2152k</div>
<div class="t" style="right:1967.00px;top:1494.44px;font:400 24px/24px 'Liberation Mono', monospace;color:#F3F3FA;">17</div>
<div class="t" style="left:666.50px;top:1494.44px;font:400 24px/24px 'Liberation Mono', monospace;color:#F3F3FA;">INFO</div>
<div class="t" style="left:762.50px;top:1494.44px;font:400 24px/24px 'Liberation Mono', monospace;color:#F3F3FA;">11/11/2022 2:15:23 PM</div>
<div class="t" style="left:1147.30px;top:1494.44px;font:400 24px/24px 'Liberation Mono', monospace;color:#F3F3FA;white-space:pre">100 8772k  100 8772k    0     0  2314k      0  0:00:03  0:00:03 --:--:-- 2314k</div>
<div class="t" style="right:1967.00px;top:1534.53px;font:400 24px/24px 'Liberation Mono', monospace;color:#F3F3FA;">18</div>
<div class="t" style="left:666.50px;top:1534.53px;font:400 24px/24px 'Liberation Mono', monospace;color:#F3F3FA;">INFO</div>
<div class="t" style="left:762.50px;top:1534.53px;font:400 24px/24px 'Liberation Mono', monospace;color:#F3F3FA;">11/11/2022 2:15:23 PM</div>
<div class="t" style="left:1147.30px;top:1534.53px;font:400 24px/24px 'Liberation Mono', monospace;color:#F3F3FA;white-space:pre">Command finished with status SUCCESS</div>
<div class="t" style="right:1967.00px;top:1574.62px;font:400 24px/24px 'Liberation Mono', monospace;color:#F3F3FA;">19</div>
<div class="t" style="left:666.50px;top:1574.62px;font:400 24px/24px 'Liberation Mono', monospace;color:#F3F3FA;">INFO</div>
<div class="t" style="left:762.50px;top:1574.62px;font:400 24px/24px 'Liberation Mono', monospace;color:#F3F3FA;">11/11/2022 2:15:23 PM</div>
<div class="t" style="left:1147.30px;top:1574.62px;font:400 24px/24px 'Liberation Mono', monospace;color:#F3F3FA;white-space:pre">Command execution finished with status SUCCESS</div>
<svg class="b" style="left:585px;top:1627.71px" width="18" height="22" viewBox="0 0 18 22"><path d="M5 3 L13.2 11.3 L5 19.6" fill="none" stroke="#6B6D85" stroke-width="3.8" stroke-linecap="round" stroke-linejoin="round"/></svg>
<svg class="b" style="left:640px;top:1626.71px" width="24" height="24" viewBox="0 0 24 24"><circle cx="12" cy="12" r="12" fill="#6B6D85"/><path d="M5.6 11.4 L10.6 16.4 L18.6 8.6" fill="none" stroke="#0A0A0B" stroke-width="3" stroke-linecap="square" stroke-linejoin="miter"/></svg>
<div class="t" style="left:724.40px;top:1626.25px;font:400 28px/28px 'Liberation Mono', monospace;color:#B0B1C4;-webkit-text-stroke:0.55px #B0B1C4">Cleanup</div>
</div>
</body></html>
